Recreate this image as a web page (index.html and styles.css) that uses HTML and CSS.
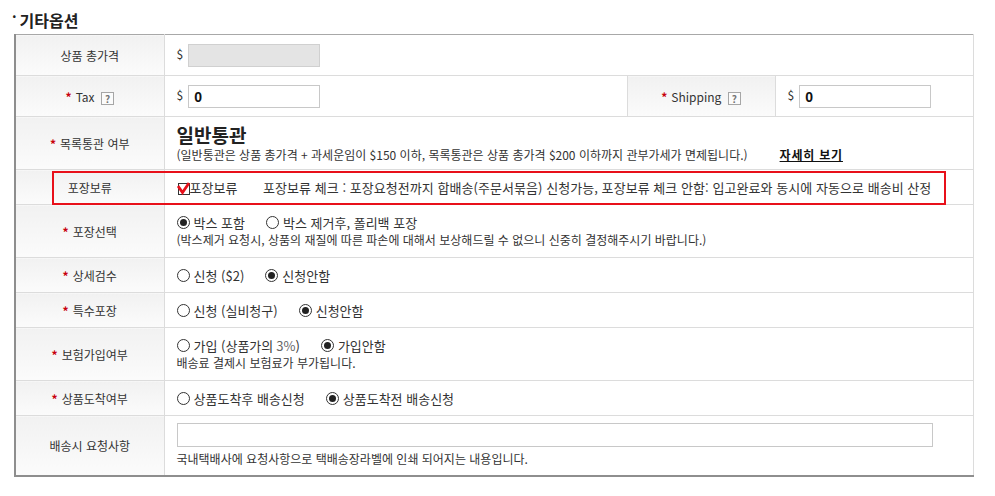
FILE: index.html
```html
<!DOCTYPE html>
<html lang="ko">
<head>
    <meta charset="UTF-8">
    <title>기타옵션</title>
    <link rel="stylesheet" href="styles.css">
</head>
<body>
    <div id="page">
        <h3 class="title"><span class="dot">·</span>기타옵션</h3>
        <div class="table_wrap">
            <table class="opt_table">
                <colgroup>
                    <col class="c_label">
                    <col class="c_value">
                    <col class="c_label2">
                    <col>
                </colgroup>
                <tr class="h41">
                    <th>상품 총가격</th>
                    <td colspan="3"><span class="dollar">$</span><input type="text" class="price disabled" disabled></td>
                </tr>
                <tr class="h41">
                    <th><span class="req">*</span>Tax <span class="help">?</span></th>
                    <td><span class="dollar">$</span><input type="text" class="price" value="0"></td>
                    <th><span class="req">*</span>Shipping <span class="help">?</span></th>
                    <td><span class="dollar">$</span><input type="text" class="price" value="0"></td>
                </tr>
                <tr class="h53">
                    <th><span class="req">*</span>목록통관 여부</th>
                    <td colspan="3">
                        <div class="big">일반통관</div>
                        <div class="note">(일반통관은 상품 총가격 + 과세운임이 $150 이하, 목록통관은 상품 총가격 $200 이하까지 관부가세가 면제됩니다.)<a href="#" class="more">자세히 보기</a></div>
                    </td>
                </tr>
                <tr class="h35">
                    <th>포장보류</th>
                    <td colspan="3" class="hold">
                        <span class="check"><svg width="13" height="13" viewBox="0 0 13 13"><rect x="1.5" y="1.5" width="11" height="11" fill="#fff" stroke="#333"/><path d="M1 4 L5.5 10.5 L12 1" fill="none" stroke="#e8101a" stroke-width="2.8"/></svg></span>포장보류
                        <span class="hold_info">포장보류 체크 : 포장요청전까지 합배송(주문서묶음) 신청가능, 포장보류 체크 안함: 입고완료와 동시에 자동으로 배송비 산정</span>
                    </td>
                </tr>
                <tr class="h53">
                    <th><span class="req">*</span>포장선택</th>
                    <td colspan="3">
                        <div class="radios">
                            <label><span class="radio on"></span>박스 포함</label>
                            <label><span class="radio"></span>박스 제거후, 폴리백 포장</label>
                        </div>
                        <div class="note">(박스제거 요청시, 상품의 재질에 따른 파손에 대해서 보상해드릴 수 없으니 신중히 결정해주시기 바랍니다.)</div>
                    </td>
                </tr>
                <tr class="h35">
                    <th><span class="req">*</span>상세검수</th>
                    <td colspan="3">
                        <div class="radios">
                            <label><span class="radio"></span>신청 ($2)</label>
                            <label><span class="radio on"></span>신청안함</label>
                        </div>
                    </td>
                </tr>
                <tr class="h35">
                    <th><span class="req">*</span>특수포장</th>
                    <td colspan="3">
                        <div class="radios">
                            <label><span class="radio"></span>신청 (실비청구)</label>
                            <label><span class="radio on"></span>신청안함</label>
                        </div>
                    </td>
                </tr>
                <tr class="h53">
                    <th><span class="req">*</span>보험가입여부</th>
                    <td colspan="3">
                        <div class="radios">
                            <label><span class="radio"></span>가입 (상품가의 <span class="pct">3%</span>)</label>
                            <label><span class="radio on"></span>가입안함</label>
                        </div>
                        <div class="note">배송료 결제시 보험료가 부가됩니다.</div>
                    </td>
                </tr>
                <tr class="h35">
                    <th><span class="req">*</span>상품도착여부</th>
                    <td colspan="3">
                        <div class="radios">
                            <label><span class="radio"></span>상품도착후 배송신청</label>
                            <label><span class="radio on"></span>상품도착전 배송신청</label>
                        </div>
                    </td>
                </tr>
                <tr class="h60">
                    <th>배송시 요청사항</th>
                    <td colspan="3">
                        <input type="text" class="request">
                        <div class="note">국내택배사에 요청사항으로 택배송장라벨에 인쇄 되어지는 내용입니다.</div>
                    </td>
                </tr>
            </table>
            <div class="highlight"></div>
        </div>
    </div>
</body>
</html>
```

FILE: styles.css
```css
body {
    margin: 0;
    font-family: "Noto Sans CJK KR", "Noto Sans", sans-serif;
    font-size: 12px;
    color: #333;
}

#page {
    padding: 6px 0 0 14px;
}

.title {
    margin: 0 0 8px -2px;
    height: 20px;
    font-size: 16px;
    font-weight: bold;
    color: #222;
    line-height: 20px;
}

    .title .dot {
        font-size: 14px;
        margin-right: 3px;
        vertical-align: 5px;
    }

.table_wrap {
    position: relative;
    width: 960px;
}

.opt_table {
    width: 960px;
    border-collapse: collapse;
    border-top: 1px solid #a8a8a8;
    border-left: 2px solid #8e8e8e;
    border-right: 1px solid #8e8e8e;
    border-bottom: 2px solid #8e8e8e;
    table-layout: fixed;
}

.c_label { width: 149px; }
.c_value { width: 463px; }
.c_label2 { width: 148px; }

.opt_table th,
.opt_table td {
    border-bottom: 1px solid #dcdcdc;
    padding: 0;
    line-height: 17px;
}

.opt_table th {
    background: linear-gradient(to bottom, #f1f1f1, #fbfbfb);
    border-right: 1px solid #dcdcdc;
    font-weight: normal;
    text-align: center;
    color: #333;
}

.opt_table td {
    padding-left: 12px;
    background-color: #fff;
    border-right: 1px solid #dcdcdc;
}

.h41 { height: 41px; }
.h53 { height: 53px; }
.h35 { height: 35px; }
.h60 { height: 60px; }

.req {
    color: #c8000a;
    font-weight: bold;
    margin-right: 4px;
}

.help {
    display: inline-block;
    width: 11px;
    height: 11px;
    border: 1px solid #a6a6a6;
    font-size: 10px;
    line-height: 11px;
    font-weight: bold;
    color: #777;
    margin-left: 3px;
    vertical-align: -1px;
    background-color: #fbfbfb;
}

.dollar {
    margin-right: 5px;
    vertical-align: middle;
    position: relative;
    top: -2px;
}

input {
    font-family: "Liberation Sans", sans-serif;
}

.price {
    box-sizing: border-box;
    width: 132px;
    height: 23px;
    border: 1px solid #c8c8c8;
    padding: 2px 5px 0;
    font-size: 14px;
    font-weight: bold;
    color: #111;
    vertical-align: middle;
}

    .price.disabled {
        background-color: #e4e4e4;
        border-color: #d0d0d0;
    }

.big {
    font-size: 19px;
    font-weight: bold;
    line-height: 23px;
    color: #222;
}

.note {
    color: #333;
}

.more {
    margin-left: 32px;
    font-weight: bold;
    color: #111;
    text-decoration: underline;
    letter-spacing: 0.8px;
}

.hold {
    font-size: 13px;
}

.check svg {
    vertical-align: -2px;
}

.hold_info {
    margin-left: 22px;
    letter-spacing: 0.05px;
}

.radios {
    display: flex;
    gap: 21px;
    font-size: 13px;
}

    .radios label {
        display: flex;
        align-items: center;
    }

.pct {
    color: #666;
    margin-left: 3px;
}

.radio {
    box-sizing: border-box;
    width: 13px;
    height: 13px;
    border: 1px solid #333;
    border-radius: 50%;
    margin-right: 4px;
    background-color: #fff;
    position: relative;
}

    .radio.on::after {
        content: "";
        position: absolute;
        left: 2px;
        top: 2px;
        width: 7px;
        height: 7px;
        border-radius: 50%;
        background-color: #222;
    }

.request {
    box-sizing: border-box;
    display: block;
    width: 756px;
    height: 24px;
    border: 1px solid #c8c8c8;
    margin: 0 0 3px 0;
}

.highlight {
    position: absolute;
    left: 38px;
    top: 137px;
    width: 890px;
    height: 30px;
    border: 2px solid #e8101a;
}
```
